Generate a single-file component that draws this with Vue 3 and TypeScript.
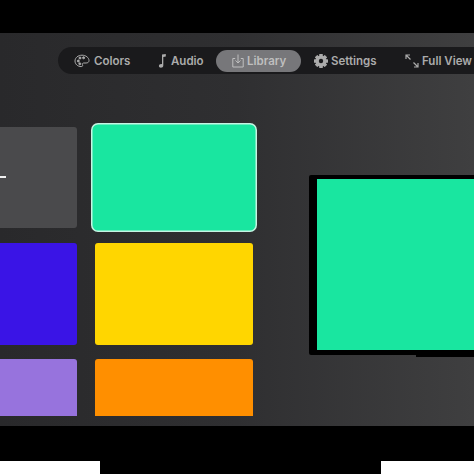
<script setup lang="ts">
interface NavItem { label: string; icon: string; active?: boolean }
const nav: NavItem[] = [
  { label: 'Colors', icon: 'palette' },
  { label: 'Audio', icon: 'note' },
  { label: 'Library', icon: 'library', active: true },
  { label: 'Settings', icon: 'gear' },
  { label: 'Full View', icon: 'expand' },
]
const gearTeeth = [0, 45, 90, 135]
</script>

<template>
  <div class="page">
    <section class="screen">
      <nav class="nav">
        <div v-for="item in nav" :key="item.label" class="nav-item" :class="[item.icon, { active: item.active }]">
          <svg v-if="item.icon === 'palette'" viewBox="0 0 16 16" class="icon" fill="none" stroke="currentColor" stroke-width="1">
            <path d="M8 2.200C4 2.200 1 4.800 1 8s2.800 5.600 6.200 5.600c1.500 0 1.700-.9 1.300-1.700-.5-1 .1-1.900 1.200-1.900h2.400c1.700 0 2.900-.9 2.900-2.500C14.900 4.600 11.900 2.200 8 2.200z" />
            <circle cx="4.300" cy="8" r="1" fill="currentColor" />
            <circle cx="6" cy="5" r="1" fill="currentColor" />
            <circle cx="9.600" cy="4.800" r="1" fill="currentColor" />
            <circle cx="5.800" cy="10.800" r="1" fill="currentColor" />
          </svg>
          <svg v-else-if="item.icon === 'note'" viewBox="0 0 16 16" class="icon" fill="currentColor">
            <path d="M8 1.600 11.800 1v2.600L9.300 4v8.500c0 1.300-1.100 2.300-2.400 2.300-1.100 0-2-.7-2-1.700 0-1.200 1-2 2.200-2 .3 0 .6 0 .9.200z" />
          </svg>
          <svg v-else-if="item.icon === 'library'" viewBox="0 0 16 16" class="icon" fill="none" stroke="currentColor" stroke-width="1">
            <path d="M5.200 5.500H2.800v8.500h10.400V5.500h-2.400M8 1.500v8.200M5.500 7.400 8 10l2.500-2.600" />
          </svg>
          <svg v-else-if="item.icon === 'gear'" viewBox="0 0 16 16" class="icon">
            <g fill="currentColor">
              <rect v-for="a in gearTeeth" :key="a" x="6.200" y="1" width="3.600" height="14" rx=".5" :transform="`rotate(${a} 8 8)`" />
            </g>
            <circle cx="8" cy="8" r="4" fill="none" stroke="currentColor" stroke-width="3" />
            <circle cx="8" cy="8" r="2.200" fill="#1a1a1c" />
          </svg>
          <svg v-else viewBox="0 0 16 16" class="icon" fill="none" stroke="currentColor" stroke-width="1.200">
            <path d="M2 6V2h4M2 2l4.500 4.500M9.500 9.500 14 14M10 14h4v-4" />
          </svg>
          <span>{{ item.label }}</span>
        </div>
      </nav>

      <div class="main">
        <div class="grid">
          <div class="card grey"><span class="dash"></span></div>
          <div class="card green selected"></div>
          <div class="card indigo"></div>
          <div class="card yellow"></div>
          <div class="card purple cut"></div>
          <div class="card orange cut"></div>
        </div>
        <div class="preview">
          <div class="preview-inner"></div>
          <div class="preview-lip"></div>
        </div>
      </div>
    </section>

    <footer class="footer">
      <div class="block left"></div>
      <div class="block right"></div>
    </footer>
  </div>
</template>

<style scoped>
.page {
  width: 474px;
  height: 474px;
  background: #000;
  display: flex;
  flex-direction: column;
  overflow: hidden;
  font-family: Inter, "Liberation Sans", sans-serif;
}
.screen {
  margin-top: 33px;
  height: 393px;
  flex: none;
  background: linear-gradient(90deg, #29292b 0%, #2f2f31 50%, #3f3f40 100%);
  overflow: hidden;
  display: flex;
  flex-direction: column;
}
.nav {
  margin: 14px 0 0 58px;
  height: 27px;
  width: 440px;
  flex: none;
  border-radius: 14px;
  background: #1a1a1c;
  display: flex;
  align-items: center;
  padding-left: 16px;
  box-sizing: border-box;
  color: #ababab;
  font-size: 11.5px;
  font-weight: 600;
}
.nav-item {
  display: flex;
  align-items: center;
  gap: 4px;
  height: 22px;
  white-space: nowrap;
}
.icon {
  width: 16px;
  height: 16px;
  flex: none;
}
.palette { width: 56px; }
.note { margin-left: 24px; width: 48px; gap: 1px; }
.nav-item.library {
  margin-left: 14px;
  width: 85px;
  box-sizing: border-box;
  padding-left: 14px;
  gap: 1px;
  border-radius: 11px;
  background: #77777a;
  color: #bfbfbf;
}
.gear { margin-left: 12px; gap: 2px; width: 64px; }
.expand { margin-left: 27px; gap: 2px; }

.main {
  flex: 1;
  display: flex;
  min-height: 0;
}
.grid {
  flex: none;
  margin: 53px 0 0 -85px;
  display: grid;
  grid-template-columns: 162px 158px;
  grid-template-rows: 101.4px 101.8px 56.6px;
  column-gap: 18px;
  row-gap: 14.4px;
  align-content: start;
}
.card {
  border-radius: 3px;
  position: relative;
}
.cut {
  border-radius: 3px 3px 0 0;
}
.grey { background: #4a4a4c; }
.dash {
  position: absolute;
  right: 71px;
  top: 49px;
  width: 20px;
  height: 2px;
  background: #f0f0f0;
}
.green { background: #19e6a0; }
.selected {
  box-shadow: 0 0 0 2.500px #19e6a0, 0 0 0 4px #c5f5e3;
}
.indigo { background: #3a14e6; }
.yellow { background: #ffd600; }
.purple { background: #9773dd; }
.orange { background: #ff8f00; }

.preview {
  margin: 101px 0 0 56px;
  width: 200px;
  height: 179.5px;
  flex: none;
  position: relative;
  background: #000;
  border-radius: 2px 0 0 2px;
  padding: 4px 0 0 8px;
  box-sizing: border-box;
}
.preview-inner {
  height: 170.5px;
  background: #19e6a0;
}
.preview-lip {
  position: absolute;
  left: 107px;
  right: 0;
  bottom: -2.500px;
  height: 2.500px;
  background: #000;
}

.footer {
  margin-top: 35px;
  height: 13px;
  flex: none;
  display: flex;
  justify-content: space-between;
}
.block { background: #fff; height: 13px; }
.left { width: 100px; }
.right { width: 93px; }
</style>
